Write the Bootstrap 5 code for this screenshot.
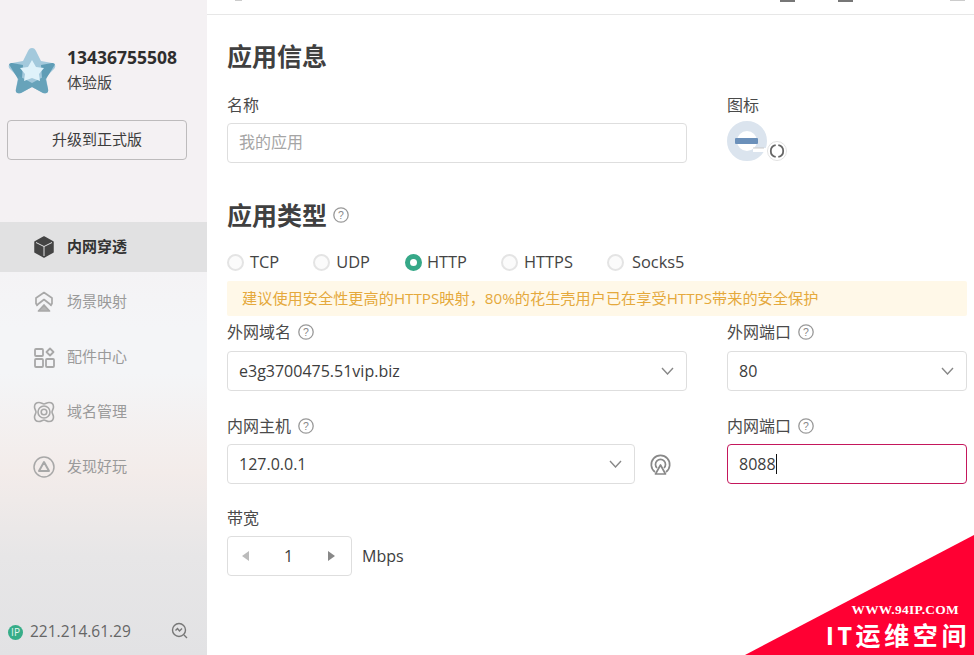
<!DOCTYPE html>
<html lang="zh">
<head>
    <meta charset="UTF-8">
    <title>应用信息</title>
    <link href="https://cdn.jsdelivr.net/npm/bootstrap@5.3.0/dist/css/bootstrap.min.css" rel="stylesheet">
    <style>
        html, body { height: 655px; overflow: hidden; }
        body {
            font-family: "Open Sans", "Noto Sans CJK SC", sans-serif;
            font-size: 16px;
            color: #3d3d3d;
            background: #fff;
        }
        .shell { height: 655px; position: relative; overflow: hidden; }
        .side {
            width: 207px;
            flex: none;
            background: linear-gradient(180deg, #f4f1f3 0%, #f4f1f3 33%, #f4f5f7 50%, #f4f5f7 57%, #f3ecea 72%, #e7e6e7 85%, #e2e2e4 100%);
        }
        .user-box { padding: 47px 0 0 8px; height: 222px; }
        .user-text { margin: -1px 0 0 3px; }
        .user-name { font-size: 17.5px; font-weight: 700; color: #2e2e2e; line-height: 22px; }
        .user-level { font-size: 15px; color: #444; line-height: 22px; margin-top: 3px; }
        .btn-upgrade {
            width: 180px; height: 40px; margin: 25px 0 0 -1px; padding: 0 0 2px;
            font-size: 15px; color: #3c3c3c;
            background: #f4f1f3; border: 1px solid #bdbbbc; border-radius: 4px;
        }
        .nav-row {
            height: 50px; margin-bottom: 5px; padding-left: 33px; gap: 12px;
            font-size: 15px; color: #9a9a9a;
        }
        .nav-row span { margin-top: -2px; }
        .nav-row.on { background: #e1e1e2; color: #333; font-weight: 700; }
        .nav-row svg { width: 22px; height: 22px; flex: none; }
        .ip-bar { padding: 0 19px 0 8px; height: 24px; margin-bottom: 11px; color: #666; font-size: 15.5px; }
        .ip-dot {
            width: 15px; height: 15px; border-radius: 50%; background: #36ad88; color: #e6f5f0;
            font-size: 10px; line-height: 15px; text-align: center; margin-right: 7px;
        }
        .main-col { min-width: 0; }
        .top-strip { height: 15px; border-bottom: 1px solid #e7e7e7; position: relative; overflow: hidden; }
        .strip-mark { position: absolute; top: 0; height: 2px; background: #777; }
        .strip-mark.faint { height: 1px; background: #ccc; }
        .form-wrap { padding: 0 7px 0 20px; }
        .sect-title { font-size: 25px; font-weight: 700; color: #404040; line-height: 34px; margin: 0; }
        .title-first { margin-top: 24px; }
        .lbl { font-size: 16px; color: #4a4a4a; line-height: 22px; gap: 7px; }
        .col-wide { width: 460px; flex: none; }
        .col-gap { width: 40px; flex: none; }
        .col-port { width: 240px; flex: none; }
        .fld {
            height: 40px; margin-top: 7px; border: 1px solid #dedede; border-radius: 4px; padding: 0 11px;
            font-size: 16px; color: #3d3d3d; background: #fff; box-shadow: none;
        }
        input.fld { padding-bottom: 3px; }
        .fld-low { margin-top: 8px; }
        .fld::placeholder { color: #a5a5a5; }
        .fld-focus { border-color: #c4175c; }
        .hint { width: 16px; height: 16px; flex: none; }
        .radio-row { margin-top: 18px; height: 24px; font-size: 16.4px; color: #444; }
        .rd { width: 17px; height: 17px; border-radius: 50%; border: 2px solid #e4e4e4; background: #fbfbfb; flex: none; margin-right: 6px; }
        .rd.on { border: 5px solid #36a888; background: #fff; margin-right: 5px; }
        .rd-text { margin-right: 34px; white-space: nowrap; }
        .rd-text.wider { margin-right: 35px; }
        .rd-last { margin-left: 2px; }
        .tip-bar {
            height: 35px; margin-top: 7px; padding: 0 15px; line-height: 34px; border-radius: 2px;
            background: #fff8e8; color: #e5a93c; font-size: 15.2px; white-space: nowrap;
        }
        .pick-caret { position: absolute; right: 13px; top: 16px; width: 13px; height: 8px; }
        .stepper { width: 125px; height: 40px; margin-top: 7px; border: 1px solid #dedede; border-radius: 4px; padding: 0 16px 0 14px; }
        .tri-l { width: 0; height: 0; border: 5px solid transparent; border-left: 0; border-right: 7px solid #bbb; }
        .tri-r { width: 0; height: 0; border: 5px solid transparent; border-right: 0; border-left: 7px solid #888; }
        .stepper-row { gap: 10px; }
        .icon-wrap { width: 60px; height: 42px; position: relative; margin-top: 5px; }
        .swap-badge { position: absolute; left: 40px; top: 20px; width: 20px; height: 20px; }
        .caret-bar { display: inline-block; width: 1px; height: 20px; background: #111; }
        .ribbon {
            position: absolute; right: 0; bottom: 0; width: 229px; height: 120px;
            background: #ff0033; clip-path: polygon(100% 0, 100% 100%, 0 100%);
            color: #fff; text-align: right; padding-right: 4px;
        }
        .ribbon-url { font-family: "Liberation Serif", serif; font-weight: 700; font-size: 13.4px; line-height: 14px; margin-top: 68px; padding-right: 11px; letter-spacing: .3px; }
        .ribbon-name { font-weight: 700; font-size: 25px; line-height: 32px; letter-spacing: 3.6px; margin-top: 2px; white-space: nowrap; }
    </style>
</head>
<body>
    <div class="shell d-flex">
        <div class="side d-flex flex-column">
            <div class="user-box">
                <div class="d-flex align-items-start gap-2">
                    <svg width="48" height="48" viewBox="0 0 48 48">
                        <path d="M24 1 C26 1 27 2 28 4 L33 14 L44 16 C48 17 48 20 46 22 L38 30 L40 42 C41 46 38 47 35 46 L24 40 L13 46 C10 47 7 46 8 42 L10 30 L2 22 C0 20 0 17 4 16 L15 14 L20 4 C21 2 22 1 24 1Z" fill="#a3c9dc"/>
                        <path d="M2 19 C0 17 2 16 4 16 L15 18 L14 31 L10 32Z M46 19 C48 17 46 16 44 16 L33 18 L34 31 L38 32Z" fill="#5f9db6"/>
                        <path d="M8 42 L11 29 L24 36 L37 29 L40 42 C41 46 38 47 35 46 L24 40 L13 46 C10 47 7 46 8 42Z" fill="#67a3ba"/>
                        <path d="M24 13 L28 20 L36 21 L31 27 L32 34 L24 31 L16 34 L17 27 L12 21 L20 20Z" fill="#dff2fa"/>
                    </svg>
                    <div class="user-text">
                        <div class="user-name">13436755508</div>
                        <div class="user-level">体验版</div>
                    </div>
                </div>
                <button class="btn btn-upgrade d-block">升级到正式版</button>
            </div>
            <div class="nav-row on d-flex align-items-center">
                <svg viewBox="0 0 22 22"><path d="M11 1 L20 6 V16 L11 21 L2 16 V6Z" fill="#444" stroke="#444" stroke-width="1.5" stroke-linejoin="round"/><path d="M3 6.5 L11 10.5 L19 6.5 M11 10.5 V20" fill="none" stroke="#e1e1e2" stroke-width="1"/></svg>
                <span>内网穿透</span>
            </div>
            <div class="nav-row d-flex align-items-center">
                <svg viewBox="0 0 22 22" fill="none" stroke="#a8a8a8" stroke-width="1.7" stroke-linejoin="round"><path d="M4.5 15 L3 12.5 V7 L11 1.5 L19 7 V12.5 L17.5 15"/><path d="M4 14 L11 8.5 L18 14"/><path d="M5.5 20 L11 14 L16.5 20Z" fill="#b5b5b5"/></svg>
                <span>场景映射</span>
            </div>
            <div class="nav-row d-flex align-items-center">
                <svg viewBox="0 0 22 22" fill="none" stroke="#a8a8a8" stroke-width="1.8"><rect x="2" y="3" width="8" height="7" rx="1"/><rect x="2" y="13" width="8" height="8" rx="1"/><rect x="13" y="13" width="8" height="8" rx="1"/><path d="M17 2.5 L20.5 6 L17 9.5 L13.5 6Z" stroke-linejoin="round"/></svg>
                <span>配件中心</span>
            </div>
            <div class="nav-row d-flex align-items-center">
                <svg viewBox="0 0 22 22" fill="none" stroke="#a8a8a8" stroke-width="1.6"><path d="M6 1.5 C8 1.5 9.5 3 11 3 C12.5 3 14 1.5 16 1.5 C19 1.5 20.5 3 20.5 6 C20.5 8 19 9.5 19 11 C19 12.5 20.5 14 20.5 16 C20.5 19 19 20.5 16 20.5 C14 20.5 12.5 19 11 19 C9.5 19 8 20.5 6 20.5 C3 20.5 1.5 19 1.5 16 C1.5 14 3 12.5 3 11 C3 9.5 1.5 8 1.5 6 C1.5 3 3 1.5 6 1.5Z"/><circle cx="11" cy="11" r="6"/><circle cx="11" cy="11" r="2.8"/></svg>
                <span>域名管理</span>
            </div>
            <div class="nav-row d-flex align-items-center">
                <svg viewBox="0 0 22 22" fill="none" stroke="#a8a8a8" stroke-width="1.5"><circle cx="11" cy="11" r="10"/><path d="M11 6 L16 15 H6Z" stroke-width="2" stroke-linejoin="round"/></svg>
                <span>发现好玩</span>
            </div>
            <div class="ip-bar d-flex align-items-center mt-auto">
                <div class="ip-dot">IP</div>
                <span>221.214.61.29</span>
                <svg class="ms-auto mb-1" width="17" height="17" viewBox="0 0 17 17" fill="none" stroke="#777" stroke-width="1.4"><circle cx="8" cy="8" r="6.5"/><path d="M4.5 8.5 L6.5 6.5 L8.5 9 L11 6.5 M13 13 L16 16"/></svg>
            </div>
        </div>

        <div class="main-col flex-grow-1">
            <div class="top-strip">
                <span class="strip-mark faint" style="left:28px;width:7px"></span>
                <span class="strip-mark" style="left:573px;width:15px"></span>
                <span class="strip-mark" style="left:631px;width:15px"></span>
                <span class="strip-mark faint" style="left:743px;width:15px"></span>
            </div>
            <div class="form-wrap">
                <h2 class="sect-title title-first">应用信息</h2>
                <div class="d-flex" style="margin-top:21px">
                    <div class="col-wide">
                        <div class="lbl d-flex align-items-center">名称</div>
                        <input class="form-control fld" placeholder="我的应用">
                    </div>
                    <div class="col-gap"></div>
                    <div class="col-port">
                        <div class="lbl d-flex align-items-center">图标</div>
                        <div class="icon-wrap">
                            <svg width="42" height="42" viewBox="0 0 42 42"><circle cx="20" cy="20" r="15" fill="#fff" stroke="#dbe4ee" stroke-width="10"/><path d="M26 27 H42 V31 H26Z" fill="#fff"/><path d="M26 27 H37" stroke="#c9c9c9" stroke-width="1"/><rect x="8" y="17" width="23" height="6" rx="1" fill="#6b90ba"/></svg>
                            <svg class="swap-badge" viewBox="0 0 20 20" fill="none"><circle cx="10" cy="10" r="9.5" fill="#fff" stroke="#e2e2e2"/><path d="M8.7 4.1 A6 6 0 0 0 8.7 15.9 M11.3 4.1 A6 6 0 0 1 11.3 15.9" stroke="#666" stroke-width="1.8"/></svg>
                        </div>
                    </div>
                </div>

                <div class="d-flex align-items-center" style="margin-top:35px;gap:6px">
                    <h2 class="sect-title">应用类型</h2>
                    <svg class="hint" viewBox="0 0 16 16"><circle cx="8" cy="8" r="7.2" fill="none" stroke="#999" stroke-width="1.3"/><text x="8" y="11.6" text-anchor="middle" font-size="10.5" fill="#888" font-family="Liberation Sans">?</text></svg>
                </div>
                <div class="radio-row d-flex align-items-center">
                    <span class="rd"></span><span class="rd-text">TCP</span>
                    <span class="rd"></span><span class="rd-text wider">UDP</span>
                    <span class="rd on"></span><span class="rd-text">HTTP</span>
                    <span class="rd"></span><span class="rd-text">HTTPS</span>
                    <span class="rd"></span><span class="rd-last">Socks5</span>
                </div>
                <div class="tip-bar">建议使用安全性更高的HTTPS映射，80%的花生壳用户已在享受HTTPS带来的安全保护</div>

                <div class="d-flex" style="margin-top:5px">
                    <div class="col-wide">
                        <div class="lbl d-flex align-items-center">外网域名
                            <svg class="hint" viewBox="0 0 16 16"><circle cx="8" cy="8" r="7.2" fill="none" stroke="#999" stroke-width="1.3"/><text x="8" y="11.6" text-anchor="middle" font-size="10.5" fill="#888" font-family="Liberation Sans">?</text></svg>
                        </div>
                        <div class="position-relative">
                            <div class="fld fld-low d-flex align-items-center">e3g3700475.51vip.biz</div>
                            <svg class="pick-caret" viewBox="0 0 13 8" fill="none" stroke="#888" stroke-width="1.4"><path d="M1 1 L6.5 7 L12 1"/></svg>
                        </div>
                    </div>
                    <div class="col-gap"></div>
                    <div class="col-port">
                        <div class="lbl d-flex align-items-center">外网端口
                            <svg class="hint" viewBox="0 0 16 16"><circle cx="8" cy="8" r="7.2" fill="none" stroke="#999" stroke-width="1.3"/><text x="8" y="11.6" text-anchor="middle" font-size="10.5" fill="#888" font-family="Liberation Sans">?</text></svg>
                        </div>
                        <div class="position-relative">
                            <div class="fld fld-low d-flex align-items-center">80</div>
                            <svg class="pick-caret" viewBox="0 0 13 8" fill="none" stroke="#888" stroke-width="1.4"><path d="M1 1 L6.5 7 L12 1"/></svg>
                        </div>
                    </div>
                </div>

                <div class="d-flex" style="margin-top:24px">
                    <div class="col-wide d-flex">
                        <div style="width:408px">
                            <div class="lbl d-flex align-items-center">内网主机
                                <svg class="hint" viewBox="0 0 16 16"><circle cx="8" cy="8" r="7.2" fill="none" stroke="#999" stroke-width="1.3"/><text x="8" y="11.6" text-anchor="middle" font-size="10.5" fill="#888" font-family="Liberation Sans">?</text></svg>
                            </div>
                            <div class="position-relative">
                                <div class="fld d-flex align-items-center">127.0.0.1</div>
                                <svg class="pick-caret" viewBox="0 0 13 8" fill="none" stroke="#888" stroke-width="1.4"><path d="M1 1 L6.5 7 L12 1"/></svg>
                            </div>
                        </div>
                        <svg class="align-self-end" style="margin:0 0 9px 15px" width="21" height="21" viewBox="0 0 21 21" fill="none" stroke="#888" stroke-width="1.7"><path d="M5 18 A9.2 9.2 0 1 1 16 18"/><path d="M7 14 A5 5 0 1 1 14 14"/><path d="M10.5 11 L15.5 20 H5.5Z" fill="#fff" stroke-linejoin="round"/></svg>
                    </div>
                    <div class="col-gap"></div>
                    <div class="col-port">
                        <div class="lbl d-flex align-items-center">内网端口
                            <svg class="hint" viewBox="0 0 16 16"><circle cx="8" cy="8" r="7.2" fill="none" stroke="#999" stroke-width="1.3"/><text x="8" y="11.6" text-anchor="middle" font-size="10.5" fill="#888" font-family="Liberation Sans">?</text></svg>
                        </div>
                        <div class="fld fld-focus d-flex align-items-center">8088<span class="caret-bar"></span></div>
                    </div>
                </div>

                <div class="lbl" style="margin-top:23px">带宽</div>
                <div class="d-flex align-items-center stepper-row">
                    <div class="stepper d-flex align-items-center justify-content-between">
                        <span class="tri-l"></span><span>1</span><span class="tri-r"></span>
                    </div>
                    <span style="margin-top:7px">Mbps</span>
                </div>
            </div>
        </div>

        <div class="ribbon">
            <div class="ribbon-url">WWW.94IP.COM</div>
            <div class="ribbon-name">IT运维空间</div>
        </div>
    </div>
    <script src="https://cdn.jsdelivr.net/npm/bootstrap@5.3.0/dist/js/bootstrap.bundle.min.js"></script>
</body>
</html>
